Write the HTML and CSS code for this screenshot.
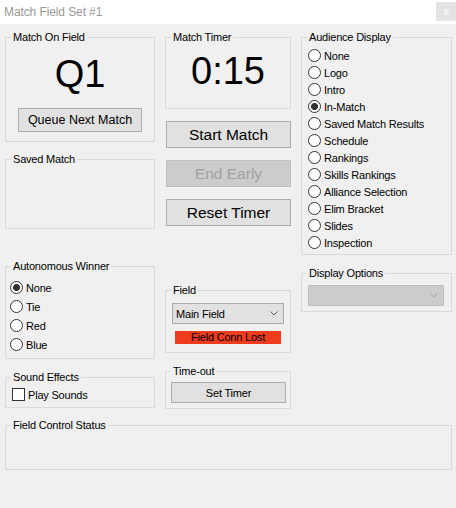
FILE: index.html
```html
<!DOCTYPE html>
<html>
<head>
<meta charset="utf-8">
<title>Match Field Set #1</title>
<link rel="stylesheet" href="styles.css">
</head>
<body>
<div class="window">
  <div class="titlebar">
    <span class="title">Match Field Set #1</span>
    <span class="close">x</span>
  </div>
  <div class="client">
    <div class="columns">
      <div class="col col-left">
        <fieldset class="group g-match">
          <legend>Match On Field</legend>
          <div class="big big-match">Q1</div>
          <button class="btn btn-queue">Queue Next Match</button>
        </fieldset>
        <fieldset class="group g-saved">
          <legend>Saved Match</legend>
        </fieldset>
        <fieldset class="group g-auto">
          <legend>Autonomous Winner</legend>
          <div class="radios auto-list">
            <div class="radio-row"><span class="radio checked"></span>None</div>
            <div class="radio-row"><span class="radio"></span>Tie</div>
            <div class="radio-row"><span class="radio"></span>Red</div>
            <div class="radio-row"><span class="radio"></span>Blue</div>
          </div>
        </fieldset>
        <fieldset class="group g-sound">
          <legend>Sound Effects</legend>
          <div class="check-row"><span class="check"></span>Play Sounds</div>
        </fieldset>
      </div>
      <div class="col col-mid">
        <fieldset class="group g-timer">
          <legend>Match Timer</legend>
          <div class="big big-timer">0:15</div>
        </fieldset>
        <button class="btn btn-big">Start Match</button>
        <button class="btn btn-big btn-disabled">End Early</button>
        <button class="btn btn-big">Reset Timer</button>
        <fieldset class="group g-field">
          <legend>Field</legend>
          <div class="combo combo-field">
            <span>Main Field</span>
            <svg class="chev" width="8" height="5" viewBox="0 0 8 5"><polyline points="0.5,0.5 4,4 7.5,0.5" fill="none" stroke="#606060" stroke-width="1"/></svg>
          </div>
          <div class="status-red">Field Conn Lost</div>
        </fieldset>
        <fieldset class="group g-timeout">
          <legend>Time-out</legend>
          <button class="btn btn-settimer">Set Timer</button>
        </fieldset>
      </div>
      <div class="col col-right">
        <fieldset class="group g-aud">
          <legend>Audience Display</legend>
          <div class="radios aud-list">
            <div class="radio-row"><span class="radio"></span>None</div>
            <div class="radio-row"><span class="radio"></span>Logo</div>
            <div class="radio-row"><span class="radio"></span>Intro</div>
            <div class="radio-row"><span class="radio checked"></span>In-Match</div>
            <div class="radio-row"><span class="radio"></span>Saved Match Results</div>
            <div class="radio-row"><span class="radio"></span>Schedule</div>
            <div class="radio-row"><span class="radio"></span>Rankings</div>
            <div class="radio-row"><span class="radio"></span>Skills Rankings</div>
            <div class="radio-row"><span class="radio"></span>Alliance Selection</div>
            <div class="radio-row"><span class="radio"></span>Elim Bracket</div>
            <div class="radio-row"><span class="radio"></span>Slides</div>
            <div class="radio-row"><span class="radio"></span>Inspection</div>
          </div>
        </fieldset>
        <fieldset class="group g-disp">
          <legend>Display Options</legend>
          <div class="combo combo-disabled">
            <span></span>
            <svg class="chev" width="8" height="5" viewBox="0 0 8 5"><polyline points="0.5,0.5 4,4 7.5,0.5" fill="none" stroke="#a8a8a8" stroke-width="1"/></svg>
          </div>
        </fieldset>
      </div>
    </div>
    <fieldset class="group g-status">
      <legend>Field Control Status</legend>
    </fieldset>
  </div>
</div>
</body>
</html>
```

FILE: styles.css
```css
body {
  margin: 0;
  background: #f0f0f0;
  font-family: "Liberation Sans", Arial, sans-serif;
  font-size: 11px;
  letter-spacing: -0.2px;
  color: #000;
}

.window {
  width: 456px;
  height: 508px;
  background: #f0f0f0;
  overflow: hidden;
}

.titlebar {
  height: 24px;
  background: #fff;
  display: flex;
  justify-content: space-between;
  align-items: flex-start;
}

.title {
  font-size: 12px;
  line-height: 24px;
  color: #999;
  padding-left: 4px;
  letter-spacing: -0.1px;
}

.close {
  width: 20px;
  height: 19px;
  margin-top: 2px;
  background: #e3e3e3;
  color: #f7f7f7;
  font-size: 11px;
  font-weight: bold;
  line-height: 18px;
  text-align: center;
  letter-spacing: 0;
}

.client {
  padding: 7px 0 0 5px;
}

.columns {
  display: flex;
  gap: 10px;
  align-items: flex-start;
}

.col {
  display: flex;
  flex-direction: column;
  align-items: flex-start;
}

.col-left { width: 150px; }
.col-mid { width: 126px; }
.col-right { width: 151px; }

.group {
  margin: 0;
  padding: 0;
  border: 1px solid #dadada;
  box-sizing: border-box;
  min-width: 0;
  width: 100%;
}

legend {
  margin-left: 5px;
  padding: 0 2px;
  font-size: 11px;
  line-height: 12px;
}

/* left column */
.g-match { height: 111px; }
.g-saved { height: 76px; margin-top: 11px; }
.g-auto { height: 99px; margin-top: 31px; }
.g-sound { height: 37px; margin-top: 12px; }

/* middle column */
.g-timer { height: 78px; }
.g-field { height: 69px; margin-top: 58px; }
.g-timeout { height: 44px; margin-top: 12px; }

/* right column */
.g-aud { height: 224px; }
.g-disp { height: 45px; margin-top: 12px; }

.g-status {
  width: 447px;
  height: 51px;
  margin-top: 10px;
}

.big {
  font-size: 38px;
  line-height: 38px;
  text-align: center;
  letter-spacing: 0;
}

.big-match { margin-top: 12px; }
.big-timer { margin-top: 9px; }

.btn {
  display: block;
  font-family: "Liberation Sans", Arial, sans-serif;
  background: #e1e1e1;
  border: 1px solid #adadad;
  color: #000;
  padding: 0;
  box-sizing: border-box;
  border-radius: 0;
}

.btn-queue {
  width: 124px;
  height: 24px;
  margin: 15px 0 0 12px;
  font-size: 12.5px;
  letter-spacing: 0;
}

.btn-big {
  width: 125px;
  height: 27px;
  margin: 12px 0 0 1px;
  font-size: 15.5px;
  letter-spacing: 0;
}

.btn-disabled {
  background: #cccccc;
  border-color: #bfbfbf;
  color: #a0a0a0;
}

.btn-settimer {
  width: 115px;
  height: 21px;
  margin: 5px 0 0 5px;
  font-size: 11px;
  letter-spacing: -0.2px;
}

.radios {
  display: flex;
  flex-direction: column;
}

.radio-row {
  display: flex;
  align-items: center;
  gap: 3px;
  height: 17px;
}

.aud-list { padding: 4px 0 0 6px; }
.auto-list { padding: 6px 0 0 4px; }
.auto-list .radio-row { height: 19px; }

.radio {
  width: 13px;
  height: 13px;
  box-sizing: border-box;
  border: 1px solid #333;
  border-radius: 50%;
  background: #fff;
  flex: none;
}

.radio.checked {
  background: radial-gradient(circle, #333 0 3.2px, #fff 3.8px);
}

.check-row {
  display: flex;
  align-items: center;
  gap: 3px;
  height: 17px;
  padding: 3px 0 0 6px;
}

.check {
  width: 13px;
  height: 13px;
  box-sizing: border-box;
  border: 1px solid #333;
  background: #fff;
  flex: none;
}

.combo {
  display: flex;
  align-items: center;
  justify-content: space-between;
  box-sizing: border-box;
  height: 21px;
  border: 1px solid #adadad;
  background: #e1e1e1;
  padding: 0 5px 0 3px;
}

.combo-field {
  width: 112px;
  margin: 7px 0 0 6px;
}

.combo-disabled {
  width: 136px;
  margin: 6px 0 0 6px;
  background: #cccccc;
  border-color: #bfbfbf;
}

.chev { display: block; }

.status-red {
  width: 106px;
  height: 13px;
  margin: 7px 0 0 9px;
  background: #ef3b1e;
  text-align: center;
  line-height: 13px;
}
```
